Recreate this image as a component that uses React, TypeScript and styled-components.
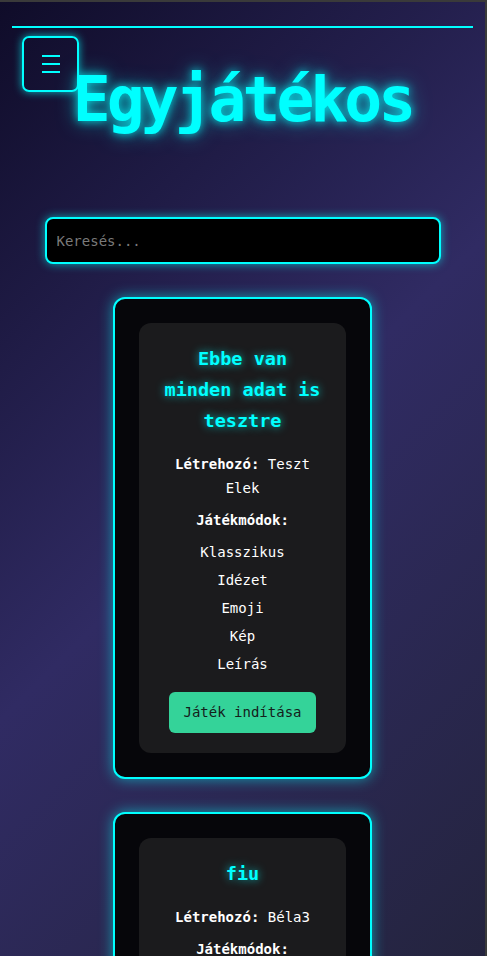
import React from 'react';
import styled, {createGlobalStyle} from 'styled-components';

const cyan = '#00ffff';
const mono = `"DejaVu Sans Mono", "Liberation Mono", monospace`;

const GlobalStyle = createGlobalStyle`
    html {
        border-top: 2px solid #3a3a3a;
        border-right: 2px solid #3a3a3a;
    }
    body {
        margin: 0;
        min-height: 100vh;
        font-family: ${mono};
        color: #fff;
        background: linear-gradient(135deg, #0f0c29, #302b63, #24243e) fixed;
    }
`;

const Page = styled.div`
    position: relative;
    padding: 24px 12px 40px;
`;

const TopLine = styled.div`
    height: 2px;
    background: ${cyan};
`;

const MenuButton = styled.button`
    position: absolute;
    top: 34px;
    left: 22px;
    width: 57px;
    height: 56px;
    display: flex;
    align-items: center;
    justify-content: center;
    padding: 0;
    background: transparent;
    border: 2px solid ${cyan};
    border-radius: 7px;
    box-shadow: 0 0 8px rgba(0, 255, 255, 0.7);
    cursor: pointer;
`;

const Title = styled.h1`
    margin: 36px 0 81px;
    text-align: center;
    font-family: ${mono};
    font-size: 63px;
    line-height: 72px;
    letter-spacing: -4px;
    font-weight: bold;
    color: ${cyan};
    text-shadow: 0 0 10px rgba(0, 255, 255, 0.8), 0 0 20px rgba(0, 255, 255, 0.5);
`;

const SearchRow = styled.div`
    display: flex;
    justify-content: center;
`;

const SearchInput = styled.input`
    box-sizing: border-box;
    width: 396px;
    height: 47px;
    padding: 0 10px;
    background: #000;
    color: #fff;
    font-family: ${mono};
    font-size: 14px;
    border: 2px solid ${cyan};
    border-radius: 8px;
    outline: none;
    box-shadow: 0 0 10px rgba(0, 255, 255, 0.6);

    &::placeholder {
        color: #7a7a7a;
    }
`;

const GameList = styled.div`
    display: flex;
    flex-direction: column;
    align-items: center;
    gap: 33px;
    padding-top: 33px;
`;

const GameCard = styled.div`
    box-sizing: border-box;
    width: 259px;
    padding: 24px;
    background: #06060a;
    border: 2px solid ${cyan};
    border-radius: 12px;
    box-shadow: 0 0 14px rgba(0, 255, 255, 0.55);
`;

const CardInner = styled.div`
    padding: 20px 24px;
    background: #1b1b1d;
    border-radius: 12px;
    text-align: center;
`;

const GameTitle = styled.h3`
    margin: 0 0 16px;
    font-size: 18.5px;
    line-height: 31px;
    font-weight: bold;
    color: ${cyan};
    text-shadow: 0 0 8px rgba(0, 255, 255, 0.7);
`;

const InfoLine = styled.p`
    margin: 0 0 8px;
    font-size: 14px;
    line-height: 24px;
`;

const Label = styled.strong`
    font-weight: bold;
`;

const ModeList = styled.ul`
    display: flex;
    flex-direction: column;
    gap: 4px;
    margin: 0;
    padding: 0;
    list-style: none;
`;

const Mode = styled.li`
    font-size: 14px;
    line-height: 24px;
`;

const PlayButton = styled.button`
    margin-top: 16px;
    padding: 10px 14px;
    background: #34d399;
    color: #14201b;
    font-family: ${mono};
    font-size: 14px;
    line-height: 21px;
    border: none;
    border-radius: 6px;
    cursor: pointer;
`;

const MenuIcon = () => (
    <svg width="20" height="20" viewBox="0 0 20 20" fill="none">
        <path d="M1 2h18M1 10h18M1 18h18" stroke={cyan} strokeWidth="2" />
    </svg>
);

const games = [
    {
        title: 'Ebbe van minden adat is tesztre',
        creator: 'Teszt Elek',
        modes: ['Klasszikus', 'Idézet', 'Emoji', 'Kép', 'Leírás'],
    },
    {
        title: 'fiu',
        creator: 'Béla3',
        modes: ['Klasszikus', 'Emoji'],
    },
];

export default function App() {
    return (
        <>
            <GlobalStyle />
            <Page>
                <TopLine />
                <MenuButton aria-label="Menü">
                    <MenuIcon />
                </MenuButton>
                <Title>Egyjátékos</Title>
                <SearchRow>
                    <SearchInput placeholder="Keresés..." />
                </SearchRow>
                <GameList>
                    {games.map((game) => (
                        <GameCard key={game.title}>
                            <CardInner>
                                <GameTitle>{game.title}</GameTitle>
                                <InfoLine>
                                    <Label>Létrehozó:</Label> {game.creator}
                                </InfoLine>
                                <InfoLine>
                                    <Label>Játékmódok:</Label>
                                </InfoLine>
                                <ModeList>
                                    {game.modes.map((mode) => (
                                        <Mode key={mode}>{mode}</Mode>
                                    ))}
                                </ModeList>
                                <PlayButton>Játék indítása</PlayButton>
                            </CardInner>
                        </GameCard>
                    ))}
                </GameList>
            </Page>
        </>
    );
}
